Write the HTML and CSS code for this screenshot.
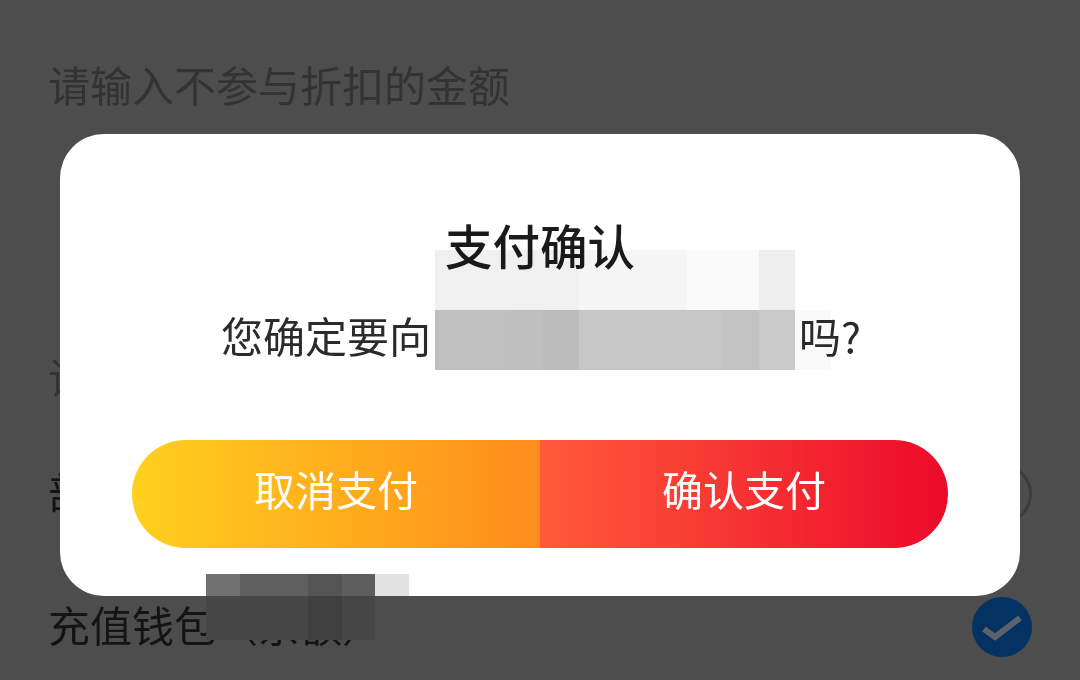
FILE: index.html
```html
<!DOCTYPE html>
<html lang="zh-CN">
<head>
<meta charset="utf-8">
<title>支付确认</title>
<link rel="stylesheet" href="styles.css">
</head>
<body>
<main class="page">
  <section class="amount-section">
    <div class="placeholder">请输入不参与折扣的金额</div>
  </section>
  <section class="pay-section">
    <div class="pay-heading">请选择支付方式</div>
    <div class="pay-row">
      <span class="pay-label">部分支付</span>
      <span class="radio"></span>
    </div>
    <div class="pay-row pay-row-last">
      <span class="pay-label">充值钱包（余额）</span>
      <span class="radio radio-on">
        <svg viewBox="0 0 60 60" width="60" height="60"><path d="M12 32L23 40L48 21" fill="none" stroke="#5c6269" stroke-width="6"/></svg>
      </span>
    </div>
  </section>
</main>
<div class="overlay">
  <div class="dialog">
    <h1 class="dialog-title">支付确认</h1>
    <p class="dialog-text">您确定要向<span class="hidden-name"></span>吗?</p>
    <div class="dialog-actions">
      <button class="action action-cancel">取消支付</button>
      <button class="action action-confirm">确认支付</button>
    </div>
  </div>
</div>
<div class="mosaic mosaic-name"></div>
<div class="mosaic mosaic-wallet"></div>
</body>
</html>
```
FILE: styles.css
```css
* { box-sizing: border-box; }
html, body { margin: 0; height: 100%; }
body {
  position: relative;
  width: 1080px;
  height: 680px;
  overflow: hidden;
  background: #4d4d4d;
  font-family: "Noto Sans CJK SC", "Noto Sans", sans-serif;
}
.page { padding-left: 48px; padding-right: 48px; }
.amount-section { height: 306px; padding-top: 55px; }
.placeholder { font-size: 42px; line-height: 58px; color: #333; }
.pay-section { height: 374px; padding-top: 42px; }
.pay-heading { font-size: 42px; line-height: 56px; color: #333; }
.pay-row { display: flex; justify-content: space-between; align-items: center; height: 60px; margin-top: 60px; }
.pay-row-last { margin-top: 73px; }
.pay-label { font-size: 42px; line-height: 56px; padding-bottom: 6px; color: #141414; }
.radio { width: 60px; height: 60px; border-radius: 50%; border: 3px solid #3c3c3c; display: block; }
.radio-on { border: 0; background: #033263; }
.radio-on svg { display: block; }

.overlay { position: absolute; inset: 0; padding: 134px 60px 0; }
.dialog { width: 960px; height: 462px; background: #fff; border-radius: 44px; padding: 76px 72px 0; }
.dialog-title { margin: 0; text-align: center; font-size: 47.500px; line-height: 70px; font-weight: 500; color: #1a1a1a; }
.dialog-text { margin: 25px 0 0; padding-left: 2px; text-align: center; font-size: 42px; line-height: 60px; color: #2b2b2b; white-space: nowrap; }
.hidden-name { display: inline-block; width: 368px; height: 10px; }
.dialog-actions { display: flex; margin-top: 75px; height: 108px; border-radius: 54px; overflow: hidden; }
.action { flex: 1; border: 0; padding: 0 0 12px; font: inherit; font-size: 41px; color: #fff; }
.action-cancel { background: linear-gradient(90deg, #ffd01e, #ff8c1b); }
.action-confirm { background: linear-gradient(90deg, #ff5a3a, #ec0a2a); }

.mosaic { position: absolute; }
.mosaic-name {
  left: 435px; top: 250px; width: 396px; height: 120px;
  mix-blend-mode: multiply;
  background:
    linear-gradient(90deg, #c0c0c0 0 72px, #bfbfbf 72px 108px, #bcbcbc 108px 144px, #c6c6c6 144px 288px, #c3c3c3 288px 324px, #c9c9c9 324px 360px, #f9f9f9 360px 396px) 0 60px / 100% 60px no-repeat,
    linear-gradient(90deg, #f0f0f0 0 144px, #f5f5f5 144px 252px, #fafafa 252px 324px, #eeeeee 324px 360px, #fff 360px) 0 0 / 100% 60px no-repeat;
}
.mosaic-wallet {
  left: 206px; top: 574px; width: 203px; height: 66px;
  background:
    linear-gradient(90deg, #717171 0 34px, #5f5f5f 34px 102px, #545454 102px 136px, #5e5e5e 136px 169px, #e2e2e2 169px 203px) 0 0 / 100% 22px no-repeat,
    linear-gradient(90deg, #464646 0 102px, #3f3f3f 102px 136px, #464646 136px 169px, transparent 169px) 0 22px / 100% 44px no-repeat;
}
```
